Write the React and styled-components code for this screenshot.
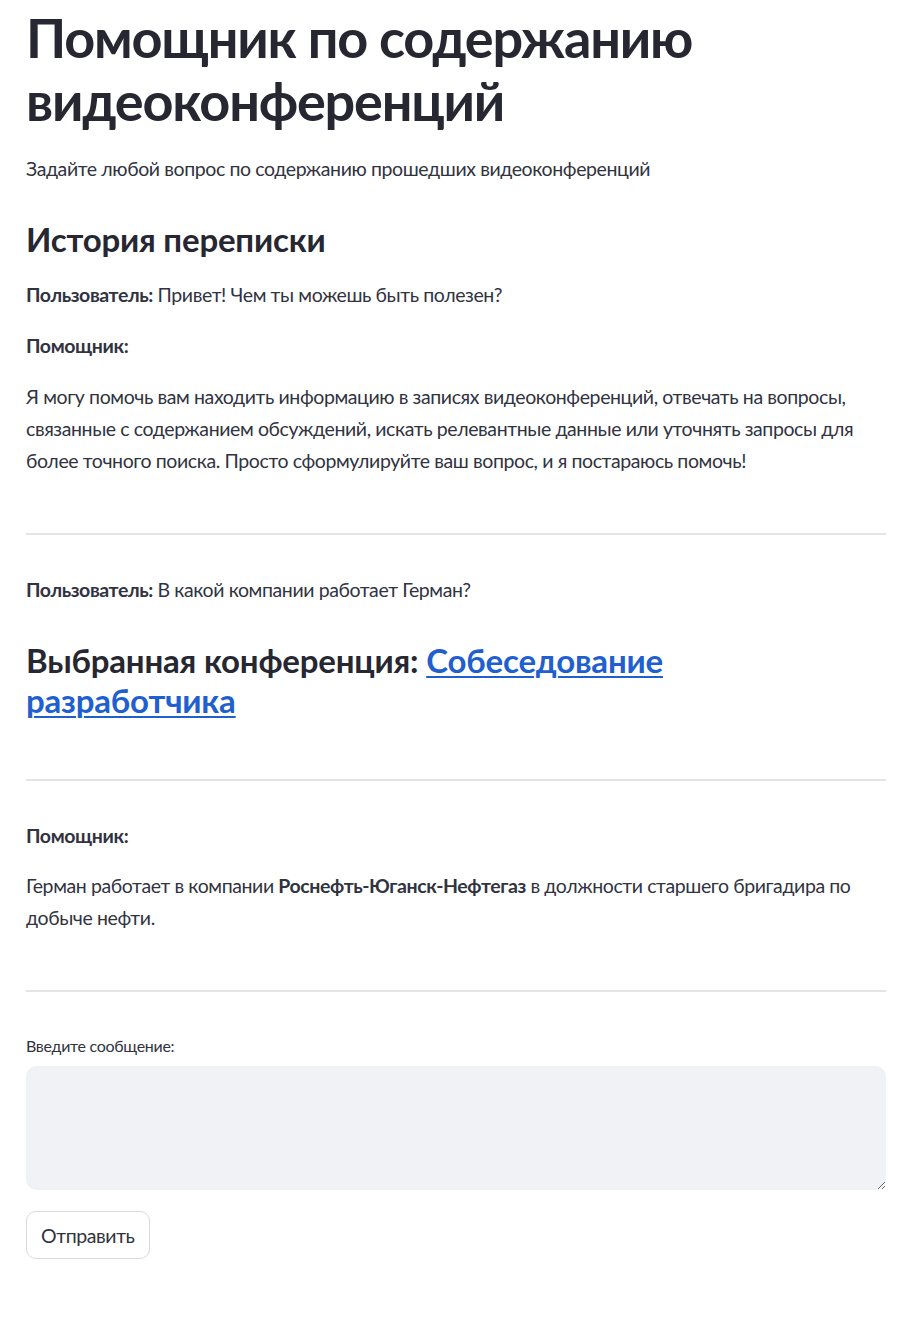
import React from "react";
import styled, { createGlobalStyle } from "styled-components";

const Global = createGlobalStyle`
  html, body { margin: 0; padding: 0; background: #ffffff; }
  body {
    font-family: "Lato", "Noto Sans", sans-serif;
    color: #31333f;
    -webkit-font-smoothing: antialiased;
  }
`;

const Main = styled.main`
  display: flex;
  flex-direction: column;
  padding: 6px 16px 60px 26px;
`;

const Title = styled.h1`
  margin: 0;
  font-size: 54px;
  line-height: 63px;
  font-weight: 700;
  letter-spacing: -1.2px;
  color: #262730;
`;

const Text = styled.p`
  margin: ${(p) => p.$mt || 0}px 0 0;
  font-size: 19.5px;
  line-height: 32px;
  letter-spacing: -0.4px;
  color: #31333f;
  strong { font-weight: 700; }
`;

const Heading = styled.h2`
  margin: ${(p) => p.$mt || 0}px 0 0;
  max-width: ${(p) => (p.$narrow ? "700px" : "none")};
  font-size: 33px;
  line-height: 40px;
  font-weight: 700;
  letter-spacing: -0.2px;
  color: #262730;
  a {
    color: #1f5fcf;
    text-decoration: underline;
    text-decoration-thickness: 2px;
    text-underline-offset: 3px;
  }
`;

const Divider = styled.hr`
  margin: ${(p) => p.$mt || 0}px 0 0;
  border: none;
  height: 2px;
  background: #e4e4e6;
`;

const Label = styled.label`
  margin-top: 44px;
  font-size: 16px;
  line-height: 20px;
  letter-spacing: -0.3px;
  color: #31333f;
`;

const Area = styled.textarea`
  margin-top: 10px;
  height: 124px;
  box-sizing: border-box;
  width: 100%;
  border: none;
  border-radius: 10px;
  background: #f0f2f6;
  resize: vertical;
  padding: 12px 16px;
  font: inherit;
  outline: none;
`;

const Button = styled.button`
  margin-top: 21px;
  align-self: flex-start;
  height: 48px;
  padding: 0 14px;
  border: 1.5px solid #d9d9dd;
  border-radius: 10px;
  background: #ffffff;
  font-family: inherit;
  font-size: 19.5px;
  letter-spacing: -0.4px;
  color: #31333f;
  cursor: pointer;
`;

export default function App() {
  return (
    <>
      <Global />
      <Main>
        <Title>Помощник по содержанию видеоконференций</Title>
        <Text $mt={21}>Задайте любой вопрос по содержанию прошедших видеоконференций</Text>
        <Heading $mt={34}>История переписки</Heading>
        <Text $mt={20}><strong>Пользователь:</strong> Привет! Чем ты можешь быть полезен?</Text>
        <Text $mt={19}><strong>Помощник:</strong></Text>
        <Text $mt={19}>
          Я могу помочь вам находить информацию в записях видеоконференций, отвечать на вопросы,
          связанные с содержанием обсуждений, искать релевантные данные или уточнять запросы для
          более точного поиска. Просто сформулируйте ваш вопрос, и я постараюсь помочь!
        </Text>
        <Divider $mt={56} />
        <Text $mt={39}><strong>Пользователь:</strong> В какой компании работает Герман?</Text>
        <Heading $mt={34} $narrow>
          Выбранная конференция: <a href="#">Собеседование разработчика</a>
        </Heading>
        <Divider $mt={59} />
        <Text $mt={39}><strong>Помощник:</strong></Text>
        <Text $mt={18}>
          Герман работает в компании <strong>Роснефть-Юганск-Нефтегаз</strong> в должности старшего бригадира по
          добыче нефти.
        </Text>
        <Divider $mt={56} />
        <Label>Введите сообщение:</Label>
        <Area />
        <Button>Отправить</Button>
      </Main>
    </>
  );
}
